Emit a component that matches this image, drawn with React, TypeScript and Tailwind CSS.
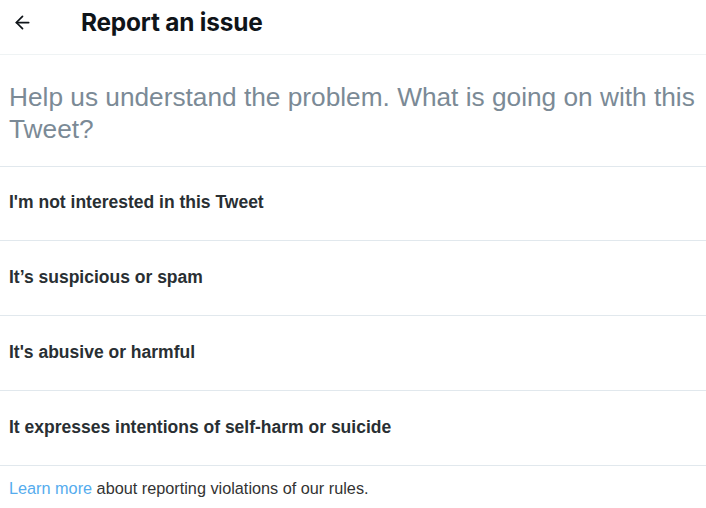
import { ArrowLeft } from 'lucide-react';

const options = [
  "I'm not interested in this Tweet",
  'It’s suspicious or spam',
  "It's abusive or harmful",
  'It expresses intentions of self-harm or suicide',
];

export default function App() {
  return (
    <div className="w-[706px] h-[508px] bg-white overflow-hidden">
      <header className="h-[55px] border-b border-[#eff3f4]">
        <div className="h-[44px] flex items-center">
          <div className="w-[81px] pl-[12px] flex items-center">
            <ArrowLeft className="w-[21px] h-[21px] text-[#0f1419]" strokeWidth={2} />
          </div>
          <h1 className="font-['Inter',sans-serif] font-bold text-[24.4px] text-[#0f1419] tracking-[-0.2px]">
            Report an issue
          </h1>
        </div>
      </header>

      <p className="font-['Liberation_Sans',Arial,sans-serif] text-[26.25px] leading-[32px] text-[#7b8a96] px-[9px] pt-[26px] pb-[21px] border-b border-[#e1e8ed]">
        Help us understand the problem. What is going on with this Tweet?
      </p>

      <ul className="font-['Liberation_Sans',Arial,sans-serif]">
        {options.map((label, i) => (
          <li
            key={label}
            className={`${i === 0 ? 'h-[74px]' : 'h-[75px]'} flex items-center px-[9px] pb-[2px] border-b border-[#e1e8ed] text-[17.5px] font-bold text-[#292f33]`}
          >
            {label}
          </li>
        ))}
      </ul>

      <p className="font-['Liberation_Sans',Arial,sans-serif] text-[16.25px] text-[#333] px-[9px] pt-[10px]">
        <span className="text-[#55acee]">Learn more</span> about reporting violations of our rules.
      </p>
    </div>
  );
}
